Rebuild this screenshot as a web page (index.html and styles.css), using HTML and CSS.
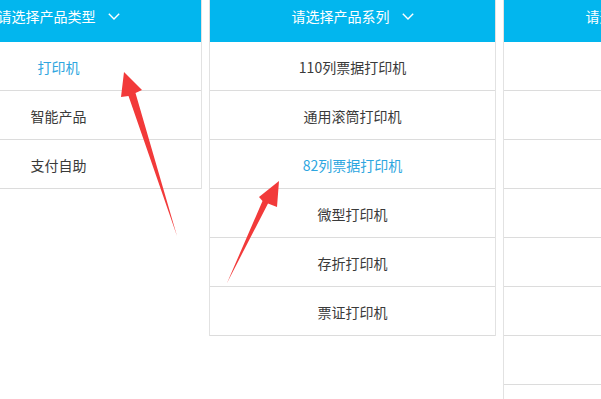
FILE: index.html
```html
<!DOCTYPE html>
<html lang="zh-CN">
<head>
<meta charset="utf-8">
<title>产品选择</title>
<link rel="stylesheet" href="styles.css">
</head>
<body>
<div class="cols">
  <div class="col">
    <div class="hd"><span>请选择产品类型</span><svg class="chev" width="12" height="7" viewBox="0 0 12 7"><path d="M0.8 0.8 L6 6 L11.2 0.8" fill="none" stroke="#fff" stroke-width="1.4"/></svg></div>
    <ul class="list">
      <li class="on">打印机</li>
      <li>智能产品</li>
      <li>支付自助</li>
    </ul>
  </div>
  <div class="col">
    <div class="hd"><span>请选择产品系列</span><svg class="chev" width="12" height="7" viewBox="0 0 12 7"><path d="M0.8 0.8 L6 6 L11.2 0.8" fill="none" stroke="#fff" stroke-width="1.4"/></svg></div>
    <ul class="list">
      <li>110列票据打印机</li>
      <li>通用滚筒打印机</li>
      <li class="on">82列票据打印机</li>
      <li>微型打印机</li>
      <li>存折打印机</li>
      <li>票证打印机</li>
    </ul>
  </div>
  <div class="col col-tall">
    <div class="hd"><span>请选择产品型号</span><svg class="chev" width="12" height="7" viewBox="0 0 12 7"><path d="M0.8 0.8 L6 6 L11.2 0.8" fill="none" stroke="#fff" stroke-width="1.4"/></svg></div>
    <ul class="list">
      <li></li><li></li><li></li><li></li><li></li><li></li><li></li><li></li>
    </ul>
  </div>
</div>
<svg class="arrows" width="601" height="399" viewBox="0 0 601 399">
  <polygon points="124,72 142,90 135.5,93 177,236 128.5,96 121,97" fill="#f23a3a"/>
  <polygon points="279,181 277,207 268,203.5 227,283 262.5,201 259,197" fill="#f23a3a"/>
</svg>
</body>
</html>
```

FILE: styles.css
```css
html, body {
  margin: 0;
  padding: 0;
}
body {
  width: 601px;
  height: 399px;
  overflow: hidden;
  position: relative;
  background: #fff;
  font-family: "Noto Sans CJK SC", "Microsoft YaHei", sans-serif;
  font-size: 14px;
}
.cols {
  display: flex;
  align-items: flex-start;
  gap: 7px;
  margin-left: -85px;
}
.col {
  flex: none;
  width: 285px;
  border-left: 1px solid #e2e2e2;
  border-right: 1px solid #e2e2e2;
}
.col-tall {
  min-height: 399px;
}
.hd {
  height: 42px;
  box-sizing: border-box;
  padding-bottom: 10px;
  background: #02b6ee;
  color: #fff;
  display: flex;
  align-items: center;
  justify-content: center;
  white-space: nowrap;
}
.chev {
  margin-left: 12px;
  flex: none;
}
.list {
  list-style: none;
  margin: 0;
  padding: 0;
}
.list li {
  border-bottom: 1px solid #dcdcdc;
  display: flex;
  align-items: center;
  justify-content: center;
  padding-top: 2px;
  height: 46px;
  color: #3a3a3a;
}
.list li.on {
  color: #2ea6e0;
}
.arrows {
  position: absolute;
  left: 0;
  top: 0;
  pointer-events: none;
}
```
